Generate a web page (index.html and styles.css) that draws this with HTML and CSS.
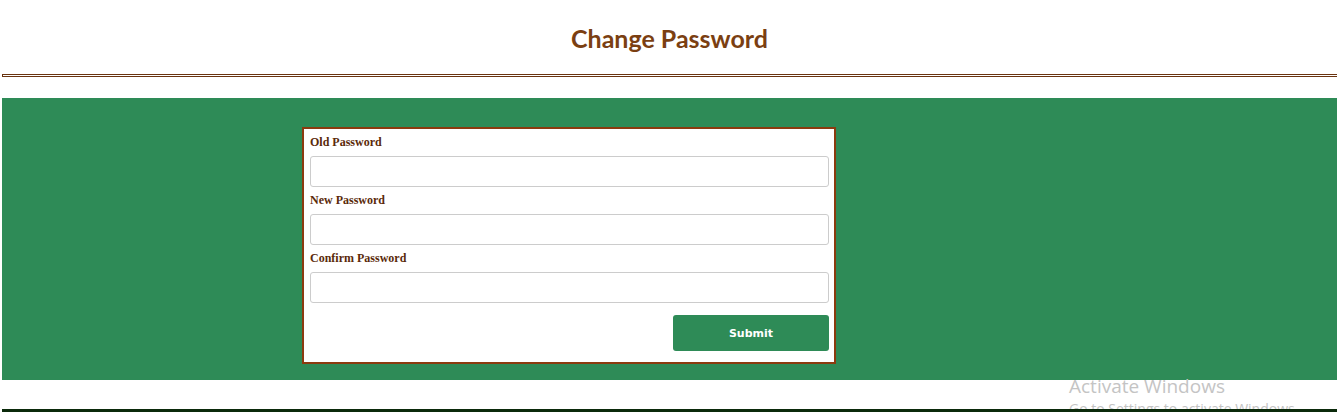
FILE: index.html
```html
<!DOCTYPE html>
<html>
<head>
<meta charset="utf-8">
<title>Change Password</title>
<link rel="stylesheet" href="styles.css">
</head>
<body>
<header class="page-header">
  <h1 class="page-title">Change Password</h1>
</header>
<hr class="divider">
<main class="band">
  <form class="card">
    <label class="field-label" for="old">Old Password</label>
    <input class="field-input" id="old" type="password">
    <label class="field-label" for="new">New Password</label>
    <input class="field-input" id="new" type="password">
    <label class="field-label" for="confirm">Confirm Password</label>
    <input class="field-input" id="confirm" type="password">
    <div class="actions">
      <button class="submit" type="button">Submit</button>
    </div>
  </form>
</main>
<div class="spacer"></div>
<footer class="footer-line"></footer>
<div class="watermark">
  <div class="wm-title">Activate Windows</div>
  <div class="wm-sub">Go to Settings to activate Windows.</div>
</div>
</body>
</html>
```
FILE: styles.css
```css
html, body {
  margin: 0;
  padding: 0;
  background: #ffffff;
  overflow: hidden;
}
body {
  margin-left: 2px;
  width: 1335px;
  height: 412px;
  position: relative;
}
.page-header {
  height: 74px;
  display: flex;
  justify-content: center;
}
.page-title {
  margin: 0;
  padding-top: 23px;
  font-family: "Comic Sans MS", "Lato", sans-serif;
  font-weight: bold;
  font-size: 25px;
  line-height: 30px;
  color: #7b3f12;
  letter-spacing: 0;
}
.divider {
  margin: 0;
  height: 1px;
  border: 1px solid #6b3410;
  border-right: none;
  box-sizing: content-box;
}
.band {
  margin-top: 21px;
  height: 282px;
  background: #2e8b57;
  padding-top: 29px;
  padding-left: 300px;
  box-sizing: border-box;
}
.card {
  width: 534px;
  height: 237px;
  box-sizing: border-box;
  border: 2px solid #8b3a0f;
  background: #ffffff;
  padding: 0 5px 0 6px;
  display: flex;
  flex-direction: column;
}
.field-label {
  display: block;
  margin-top: 6px;
  margin-bottom: 6px;
  line-height: 15px;
  font-family: "Liberation Serif", serif;
  font-weight: bold;
  font-size: 12px;
  color: #5a2a0a;
}
.field-input {
  display: block;
  width: 519px;
  height: 31px;
  box-sizing: border-box;
  border: 1px solid #cccccc;
  border-radius: 3px;
  margin: 0;
  padding: 4px 8px;
  background: #fff;
}
.actions {
  display: flex;
  justify-content: flex-end;
  margin-top: 12px;
}
.submit {
  width: 156px;
  height: 36px;
  border: none;
  border-radius: 3px;
  background: #2e8b57;
  color: #ffffff;
  font-family: "DejaVu Sans", Verdana, sans-serif;
  font-weight: bold;
  font-size: 11px;
  padding-top: 1px;
}
.spacer {
  height: 29px;
}
.footer-line {
  position: relative;
  z-index: 2;
  height: 3px;
  background: #0b2a0b;
}
.watermark {
  position: absolute;
  left: 1067px;
  top: 374px;
  z-index: 1;
  color: #c4c4c4;
  font-family: "Open Sans", "Noto Sans", sans-serif;
  white-space: nowrap;
}
.wm-title {
  font-size: 19px;
  line-height: 25px;
}
.wm-sub {
  font-size: 14px;
  line-height: 19px;
}
```
